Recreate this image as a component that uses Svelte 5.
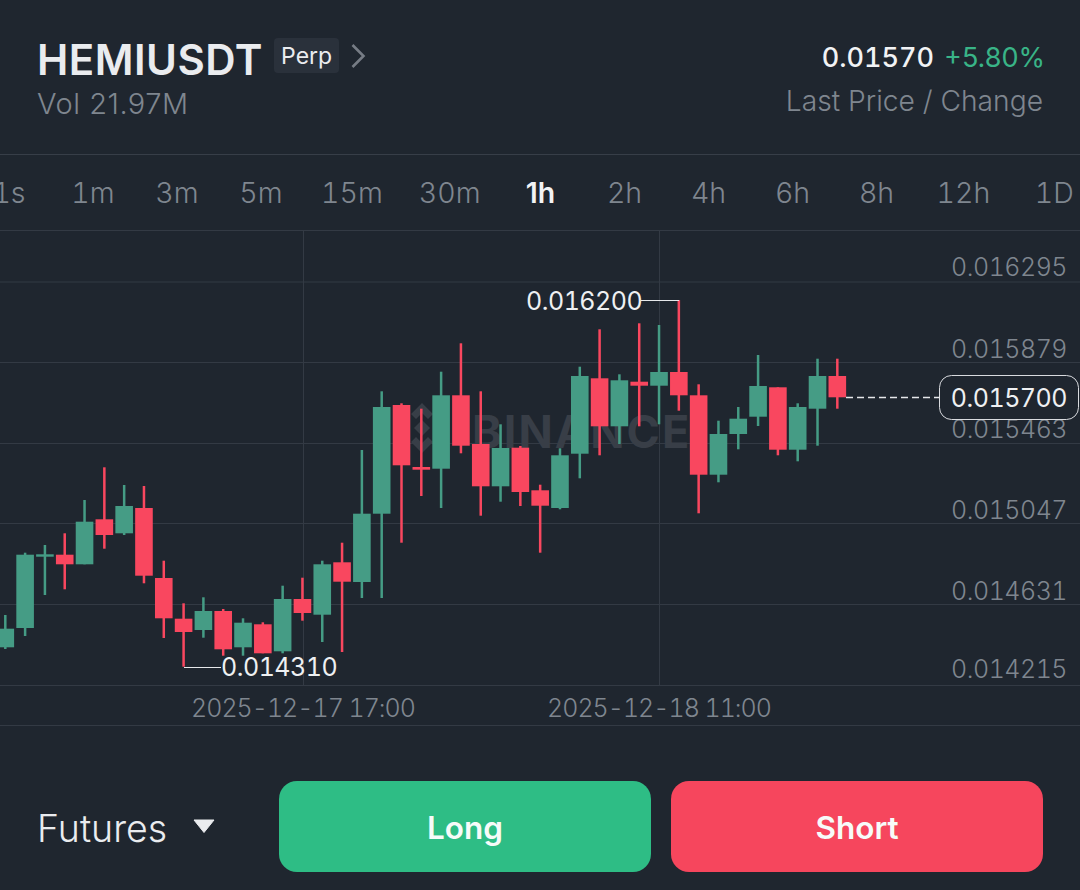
<script>
  const tabs = ['1s', '1m', '3m', '5m', '15m', '30m', '1h', '2h', '4h', '6h', '8h', '12h', '1D'];
  const activeTab = '1h';

  // up, wick top, wick bottom, body top, body bottom
  const rows = [
    [1, 615, 649, 628.7, 647.3], [1, 552.7, 636, 554.7, 628], [1, 545, 595, 554.3, 556.7],
    [0, 533.3, 589.3, 554.7, 564.3], [1, 500, 564.3, 521.7, 564.3], [0, 467.3, 548.7, 519.3, 535],
    [1, 485, 535, 506, 533.3], [0, 486, 583.3, 508, 575.7], [0, 560.7, 638, 578, 618.3],
    [0, 603.3, 666.7, 618.7, 632], [1, 597.3, 637.7, 611, 630], [0, 609, 655.7, 611, 649.3],
    [1, 618.3, 655.7, 622.7, 647.3], [0, 622.3, 653.3, 624.3, 653.3], [1, 585.7, 653.3, 599, 651.3],
    [0, 577.7, 620.7, 599, 613], [1, 560.7, 642, 564.3, 614.7], [0, 542.7, 652, 562.3, 581.7],
    [1, 450, 598, 513.7, 582], [1, 391.3, 598, 407, 513.7], [0, 403.3, 542.7, 405, 465.3],
    [0, 408.7, 496, 467, 469.7], [1, 371.7, 508, 395.3, 468.7], [0, 343.3, 453.3, 395.3, 445.7],
    [0, 391.3, 515.7, 444, 486.3], [1, 424.3, 501.7, 448, 486.3], [0, 446, 506, 447.7, 492],
    [0, 484.7, 552.7, 490.3, 505.7], [1, 448.3, 509.3, 455.3, 508], [1, 366.7, 478.3, 376, 453.7],
    [0, 329.3, 455.3, 378.3, 426.3], [1, 374.3, 444, 380.3, 426.3], [0, 323.3, 426.3, 381.7, 385.7],
    [1, 325, 424.3, 372, 385.7], [0, 300, 410.7, 372, 395.3], [0, 384.3, 513.3, 395.3, 474.7],
    [1, 420.7, 482.3, 434, 474.7], [1, 407, 449.3, 418.7, 434], [1, 355, 426, 386, 416.7],
    [0, 387.3, 455.3, 387.3, 449.7], [1, 403.3, 461.3, 407, 449.7], [1, 358.7, 445.7, 376, 408.7],
    [0, 358.7, 408.7, 376, 397.3]
  ];
  const candles = rows.map(([up, hi, lo, top, bottom], i) => ({
    x: 5.3 + i * 19.81, up, hi, lo, top, bottom
  }));

  const gridY = [230.5, 282, 362.5, 443.5, 523.5, 604.5, 685.5, 725.5];
  const gridX = [303.5, 659.5];
  const prices = [
    ['0.016295', 276], ['0.015879', 358], ['0.015463', 438],
    ['0.015047', 519], ['0.014631', 600], ['0.014215', 678]
  ];
</script>

<div class="screen">
  <header class="head">
    <div class="pair">
      <div class="title-row">
        <h1>HEMIUSDT</h1>
        <span class="tag">Perp</span>
        <svg class="chev" width="16" height="26" viewBox="0 0 16 26">
          <path d="M2.5 2 L13.5 13 L2.5 24" fill="none" stroke="#767c85" stroke-width="2.6" />
        </svg>
      </div>
      <div class="vol">Vol 21.97M</div>
    </div>
    <div class="quote">
      <div class="price-row"><span class="price">0.01570</span><span class="change">+5.80%</span></div>
      <div class="quote-label">Last Price / Change</div>
    </div>
  </header>

  <nav class="tabs">
    {#each tabs as t}
      <span class="tab" class:active={t === activeTab}>{t}</span>
    {/each}
  </nav>

  <svg class="chart" width="1080" height="497" viewBox="0 230 1080 497">
    {#each gridY as y}
      <line x1="0" x2="1080" y1={y} y2={y} class="grid" />
    {/each}
    {#each gridX as x}
      <line x1={x} x2={x} y1="230" y2="685" class="grid" />
    {/each}

    <!-- watermark -->
    <g class="mark">
      <path d="M422 403 L433 414 L428 419 L422 413 L416 419 L411 414 Z" />
      <path d="M422 453 L433 442 L428 437 L422 443 L416 437 L411 442 Z" />
      <path d="M422 420 L430 428 L422 436 L414 428 Z" />
      <text x="472" y="448" class="mark-text">BINANCE</text>
    </g>

    {#each candles as c}
      <g class={c.up ? 'up' : 'down'}>
        <rect x={c.x - 1.25} y={c.hi} width="2.5" height={c.lo - c.hi} />
        <rect x={c.x - 8.8} y={c.top} width="17.6" height={c.bottom - c.top} />
      </g>
    {/each}

    <path d="M641 300.5 H679" class="leader" />
    <path d="M184 667.5 H221" class="leader" />
    <text x="526" y="310" class="hl">0.016200</text>
    <text x="221" y="676" class="hl">0.014310</text>

    {#each prices as [label, y]}
      <text x="1067" {y} text-anchor="end" class="axis">{label}</text>
    {/each}

    <line x1="846" x2="939" y1="397.5" y2="397.5" class="dash" />
    <rect x="939.5" y="375.5" width="139" height="44" rx="12" class="last-box" />
    <text x="1067" y="407" text-anchor="end" class="hl">0.015700</text>

    <text x="303" y="717" text-anchor="middle" class="axis date">2025-12-17 17:00</text>
    <text x="659" y="717" text-anchor="middle" class="axis date">2025-12-18 11:00</text>
  </svg>

  <footer class="actions">
    <div class="market">
      <span>Futures</span>
      <svg width="22" height="14" viewBox="0 0 22 14"><path d="M1 1 H21 L11 13.5 Z" fill="#eaecef" stroke="#eaecef" stroke-linejoin="round" /></svg>
    </div>
    <button class="long">Long</button>
    <button class="short">Short</button>
  </footer>
</div>

<style>
  :global(body) {
    background: #1f262f;
  }
  .screen {
    width: 1080px;
    height: 890px;
    overflow: hidden;
    background: #1f262f;
    font-family: "Inter", "Lato", sans-serif;
    color: #eaecef;
  }

  .head {
    display: flex;
    justify-content: space-between;
    height: 155px;
    box-sizing: border-box;
    padding: 37px 37px 0 37px;
    border-bottom: 1px solid #373e48;
  }
  .title-row {
    display: flex;
    align-items: flex-start;
    height: 46px;
  }
  h1 {
    margin: 0;
    font-size: 42px;
    font-weight: 600;
    color: #eaecef;
    line-height: 46px;
    letter-spacing: 0.5px;
  }
  .tag {
    margin-left: 11px;
    margin-top: 1px;
    padding: 0 7px;
    height: 35px;
    line-height: 37px;
    border-radius: 4px;
    background: #2a313b;
    font-size: 23px;
  }
  .chev {
    margin-left: 11px;
    margin-top: 6px;
  }
  .vol {
    margin-top: 4px;
    font-size: 29px;
    line-height: 34px;
    font-weight: 300;
    letter-spacing: 0.5px;
    color: #7f868f;
  }
  .quote {
    text-align: right;
    padding-top: 2px;
  }
  .price-row {
    display: flex;
    justify-content: flex-end;
    gap: 10px;
    margin-right: -2px;
    font-size: 27px;
    line-height: 38px;
  }
  .price {
    color: #f2f3f5;
    font-weight: 500;
    font-variant-numeric: tabular-nums;
  }
  .change {
    color: #39b487;
  }
  .quote-label {
    margin-top: 7px;
    font-size: 28.2px;
    font-weight: 300;
    color: #7f868f;
  }

  .tabs {
    display: flex;
    align-items: center;
    margin-left: -33px;
    height: 75px;
    white-space: nowrap;
    font-size: 28.5px;
    font-weight: 300;
    font-variant-numeric: tabular-nums;
    color: #7f868f;
  }
  .tab {
    box-sizing: border-box;
    flex: none;
    min-width: 84px;
    padding: 0 18px;
    text-align: center;
  }
  .tab:last-child {
    margin-left: 4px;
  }
  .tab.active {
    color: #f2f3f5;
    font-weight: 600;
    font-variant-numeric: normal;
  }

  .chart {
    display: block;
    margin-top: 0;
    font-family: "Inter", sans-serif;
    font-variant-numeric: tabular-nums;
  }
  .grid {
    stroke: #333a44;
    stroke-width: 1;
  }
  .mark path {
    fill: #383e47;
  }
  .mark-text {
    fill: #383e47;
    font-size: 45px;
    font-weight: 700;
    letter-spacing: 2px;
  }
  .up rect {
    fill: #459c85;
  }
  .down rect {
    fill: #f9475f;
  }
  .leader {
    fill: none;
    stroke: #e6e8ea;
    stroke-width: 1.2;
  }
  .dash {
    stroke: #e6e8ea;
    stroke-width: 1.5;
    stroke-dasharray: 7 4;
  }
  .last-box {
    fill: #1f262f;
    stroke: #d8dade;
    stroke-width: 1;
  }
  .hl {
    fill: #eef0f2;
    font-size: 25px;
    letter-spacing: -0.5px;
  }
  .axis {
    fill: #7f868f;
    font-size: 25px;
    font-weight: 300;
    letter-spacing: -0.5px;
  }
  .date {
    letter-spacing: -1px;
  }

  .actions {
    display: flex;
    align-items: center;
    padding: 54px 37px 0 37px;
  }
  .market {
    display: flex;
    align-items: center;
    gap: 26px;
    width: 242px;
    font-size: 37.5px;
    font-weight: 300;
  }
  .market span {
    padding-top: 3px;
  }
  .market svg {
    margin-top: -2px;
  }
  button {
    width: 372px;
    height: 91px;
    padding-top: 3px;
    border: 0;
    border-radius: 18px;
    color: #f7fbf9;
    font-family: inherit;
    font-size: 31.5px;
    font-weight: 600;
  }
  .long {
    background: #2ebd85;
  }
  .short {
    margin-left: 20px;
    background: #f6465d;
  }
</style>
